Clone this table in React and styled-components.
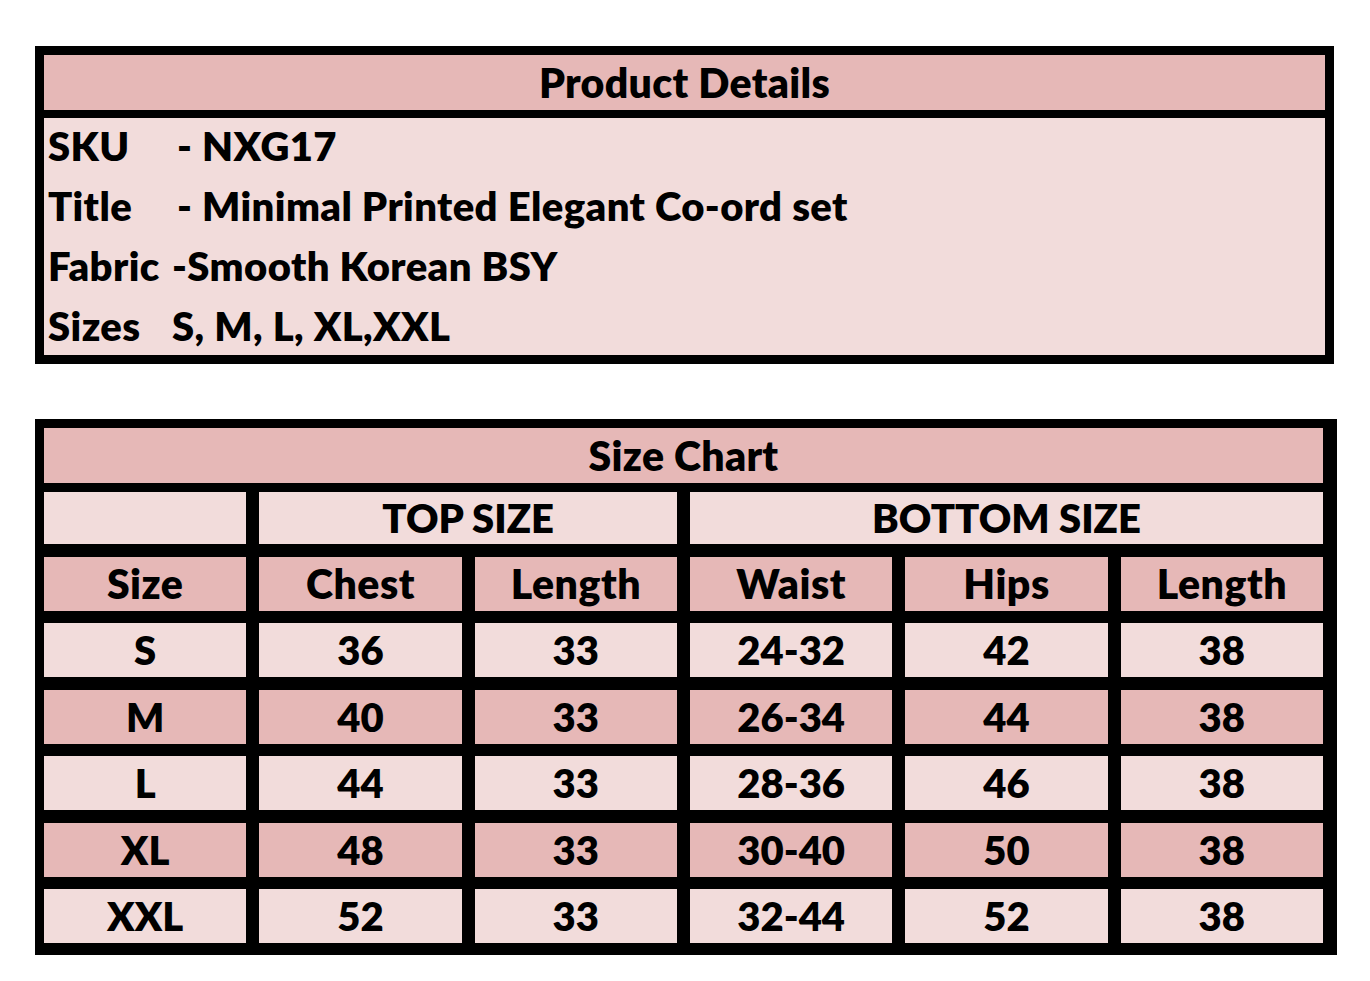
import React from 'react';
import styled, { createGlobalStyle } from 'styled-components';

const GlobalStyle = createGlobalStyle`
  body {
    margin: 0;
    background: #ffffff;
    font-family: Lato, "Open Sans", "Liberation Sans", sans-serif;
    color: #000;
  }
`;

const LIGHT = '#f2dcdb';
const DARK = '#e6b8b7';

const Page = styled.div`
  display: flex;
  flex-direction: column;
  gap: 55px;
  padding: 46px 0 0 35px;
`;

const Details = styled.section`
  width: 1299px;
  box-sizing: border-box;
  background: #000;
  padding: 9px;
  display: flex;
  flex-direction: column;
  gap: 8px;
`;

const HeaderBar = styled.div`
  height: 55px;
  background: ${DARK};
  display: flex;
  align-items: center;
  justify-content: center;
  font-weight: 800;
  font-size: 41px;
  letter-spacing: 0.3px;
`;

const DetailsBody = styled.div`
  background: ${LIGHT};
  height: 237px;
  display: grid;
  grid-template-columns: 124px 1fr;
  grid-auto-rows: 60px;
  align-items: center;
  padding: 0 4px;
`;

const Label = styled.div`
  font-weight: 800;
  font-size: 40px;
  letter-spacing: 0.4px;
  white-space: pre;
  margin-top: -4px;
`;

const Value = styled(Label)`
  margin-left: ${p => p.$indent || 0}px;
`;

const Chart = styled.section`
  width: 1302px;
  box-sizing: border-box;
  background: #000;
  padding: 9px 14px 12px 9px;
  display: flex;
  flex-direction: column;
  gap: 9px;
`;

const Grid = styled.div`
  display: grid;
  grid-template-columns: repeat(6, 1fr);
  grid-template-rows: 52px repeat(6, 54px);
  column-gap: 13px;
  row-gap: 12.5px;
`;

const Cell = styled.div`
  background: ${p => (p.$dark ? DARK : LIGHT)};
  grid-column: span ${p => p.$span || 1};
  display: flex;
  align-items: center;
  justify-content: center;
  font-weight: 800;
  font-size: 40px;
`;

const HeadCell = styled(Cell)`
  font-size: 41px;
  letter-spacing: 0.5px;
`;

const details = [
  ['SKU', '- NXG17', 5],
  ['Title', '- Minimal Printed Elegant Co-ord set', 5],
  ['Fabric', '-Smooth Korean BSY', 0],
  ['Sizes', 'S, M, L, XL,XXL', 0],
];

const heads = ['Size', 'Chest', 'Length', 'Waist', 'Hips', 'Length'];

const rows = [
  ['S', '36', '33', '24-32', '42', '38'],
  ['M', '40', '33', '26-34', '44', '38'],
  ['L', '44', '33', '28-36', '46', '38'],
  ['XL', '48', '33', '30-40', '50', '38'],
  ['XXL', '52', '33', '32-44', '52', '38'],
];

export default function App() {
  return (
    <>
      <GlobalStyle />
      <Page>
        <Details>
          <HeaderBar>Product Details</HeaderBar>
          <DetailsBody>
            {details.map(([k, v, indent]) => (
              <React.Fragment key={k}>
                <Label>{k}</Label>
                <Value $indent={indent}>{v}</Value>
              </React.Fragment>
            ))}
          </DetailsBody>
        </Details>

        <Chart>
          <HeaderBar>Size Chart</HeaderBar>
          <Grid>
            <Cell />
            <Cell $span={2}>TOP SIZE</Cell>
            <Cell $span={3}>BOTTOM SIZE</Cell>
            {heads.map((h, i) => (
              <HeadCell key={'h' + i} $dark>{h}</HeadCell>
            ))}
            {rows.map((r, ri) =>
              r.map((c, ci) => (
                <Cell key={ri + '-' + ci} $dark={ri % 2 === 1}>{c}</Cell>
              ))
            )}
          </Grid>
        </Chart>
      </Page>
    </>
  );
}
